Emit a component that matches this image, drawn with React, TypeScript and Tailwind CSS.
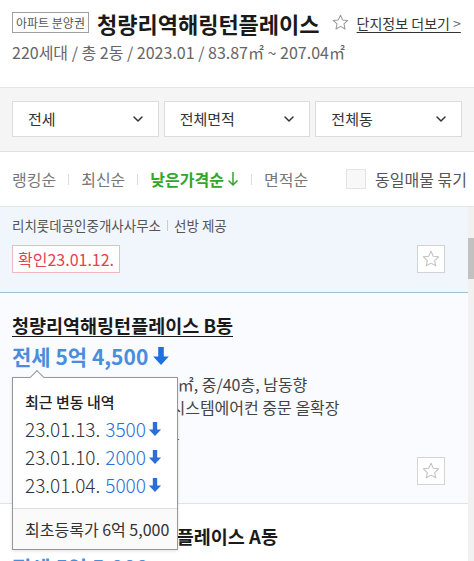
import { ChevronDown } from "lucide-react";

const FONT = { fontFamily: '"Noto Sans CJK KR", "Noto Sans", sans-serif' };

const DownArrow = ({ className }: { className?: string }) => (
  <svg viewBox="0 0 16 18" className={className} fill="currentColor">
    <path d="M5.5 1h5v8.5h4.5L8 17 1 9.5h4.5z" />
  </svg>
);

const StarOutline = ({ className }: { className?: string }) => (
  <svg viewBox="0 0 24 24" className={className} fill="none" stroke="currentColor" strokeWidth={1.3} strokeLinejoin="round">
    <path d="M12 2.8l2.75 5.9 6.45.75-4.8 4.4 1.3 6.35L12 16.95 6.3 20.2l1.3-6.35-4.8-4.4 6.45-.75z" />
  </svg>
);

const StarBox = () => (
  <div className="w-[28px] h-[28px] border border-[#d3d3d3] bg-white flex items-center justify-center">
    <StarOutline className="w-[20px] h-[20px] text-[#c4c4c4]" />
  </div>
);

const Select = ({ label }: { label: string }) => (
  <div className="flex-1 h-[36px] bg-white border border-[#dcdcdc] flex items-center justify-between pl-[15px] pr-[12px]">
    <span className="text-[15px] text-[#333]">{label}</span>
    <ChevronDown className="w-[16px] h-[16px] text-[#333]" strokeWidth={2.2} />
  </div>
);

const Sep = () => <span className="mx-[12px] w-px h-[11px] bg-[#dcdcdc]" />;

const history = [
  { date: "23.01.13.", amount: "3500" },
  { date: "23.01.10.", amount: "2000" },
  { date: "23.01.04.", amount: "5000" },
];

export default function App() {
  return (
    <div className="relative w-full h-[561px] overflow-hidden bg-white" style={FONT}>
      {/* 단지 헤더 */}
      <div className="h-[88px] border-b border-[#e6e6e6] px-3 pt-[12px]">
        <div className="flex items-center h-[21px]">
          <span className="h-[21px] px-[3px] border border-[#a0a0a0] text-[12px] text-[#555] flex items-center leading-none">
            아파트 분양권
          </span>
          <span className="ml-[8px] text-[22px] font-bold text-[#1a1a1a] leading-none">
            청량리역해링턴플레이스
          </span>
          <StarOutline className="ml-[11px] w-[19px] h-[19px] text-[#999]" />
          <span className="ml-[7px] text-[14px] text-[#333] underline underline-offset-[3px] leading-none whitespace-nowrap">
            단지정보 더보기 <span className="text-[#666]">&gt;</span>
          </span>
        </div>
        <div className="mt-[9px] text-[16px] leading-[20px] text-[#666]">
          220세대 / 총 2동 / 2023.01 / 83.87㎡ ~ 207.04㎡
        </div>
      </div>

      {/* 필터 */}
      <div className="h-[64px] bg-[#f5f5f5] border-b border-[#e2e2e2] px-3 pt-[13px] flex gap-[5px]">
        <Select label="전세" />
        <Select label="전체면적" />
        <Select label="전체동" />
      </div>

      {/* 정렬 */}
      <div className="h-[55px] border-b border-[#e6e6e6] pl-3 pr-[7px] flex items-center text-[16px]">
        <span className="text-[#777]">랭킹순</span>
        <Sep />
        <span className="text-[#777]">최신순</span>
        <Sep />
        <span className="text-[#33a52b] font-bold flex items-center">
          낮은가격순
          <svg viewBox="0 0 12 16" className="ml-[3px] w-[12px] h-[16px]" fill="none" stroke="currentColor" strokeWidth={1.5}>
            <path d="M6 1v13M1.5 9.5L6 14l4.5-4.5" />
          </svg>
        </span>
        <Sep />
        <span className="text-[#777]">면적순</span>
        <div className="ml-auto flex items-center">
          <span className="w-[20px] h-[20px] border border-[#e3e3e3] bg-[#f8f8f8]" />
          <span className="ml-[9px] text-[#555] whitespace-nowrap">동일매물 묶기</span>
        </div>
      </div>

      {/* 매물 목록 */}
      <div className="flex">
        <div className="flex-1">
          <div className="h-[86px] bg-[#f1f6fd] border-b border-[#a6bdd3] pl-3 pr-[23px] pt-[9px]">
            <div className="text-[13.5px] leading-[18px] text-[#555] flex items-center">
              리치롯데공인중개사사무소
              <span className="mx-[6px] w-px h-[11px] bg-[#ccc]" />
              선방 제공
            </div>
            <div className="mt-[11px] flex items-center justify-between">
              <span className="h-[28px] px-[5px] border border-[#f0b9bd] bg-white text-[16px] text-[#e2434e] flex items-center">
                확인23.01.12.
              </span>
              <StarBox />
            </div>
          </div>

          <div className="h-[211px] bg-[#f9fbfe] border-b border-[#dce4ec] pl-3 pr-[23px] pt-[21px] flex flex-col">
            <div className="text-[18.5px] leading-[22px] font-bold text-[#1a1a1a] underline underline-offset-[3px]">
              청량리역해링턴플레이스 B동
            </div>
            <div className="mt-[7px] flex items-center text-[21px] leading-[26px] font-bold text-[#4a8edb]">
              전세 5억 4,500
              <DownArrow className="ml-[4px] w-[18px] h-[20px] text-[#1e6fe0]" />
            </div>
            <div className="mt-[5px] text-[16px] leading-[20px] text-[#444] whitespace-nowrap">
              아파트분양권 · 114B/83㎡, 중/40층, 남동향
            </div>
            <div className="mt-[3px] text-[16px] leading-[20px] text-[#444] whitespace-nowrap">
              고층·풀옵션·커뮤니티, 시스템에어컨 중문 올확장
            </div>
            <div className="mt-[12px] text-[14px] leading-[18px] text-[#555]">
              매경부동산 | 부동산써브 제공
            </div>
            <div className="mt-[10px] self-end">
              <StarBox />
            </div>
          </div>

          <div className="bg-white pl-3 pt-[21px]">
            <div className="flex items-center text-[18.5px] leading-[22px] font-bold text-[#1a1a1a] whitespace-nowrap">
              <span className="mr-[8px] h-[14px] px-[3px] border-2 border-[#1f7a2a] text-[10px] leading-none text-[#1f7a2a] flex items-center">
                집주인
              </span>
              청량리역해링턴플레이스 A동
            </div>
            <div className="mt-[7px] text-[21px] leading-[26px] font-bold text-[#4a8edb]">전세 5억 5,000</div>
          </div>
        </div>
        <div className="w-[6px] bg-[#f1f1f1]">
          <div className="mt-[31px] h-[41px] bg-[#c1c1c1]" />
        </div>
      </div>

      {/* 최근 변동 내역 팝업 */}
      <div className="absolute left-[12px] top-[377px] w-[166px] bg-white border border-[#979797] shadow-[0_1px_3px_rgba(0,0,0,0.12)]">
        <div className="absolute -top-[6px] left-[19px] w-[10px] h-[10px] rotate-45 bg-white border-l border-t border-[#979797]" />
        <div className="relative px-[12px] pt-[14px] pb-[9px]">
          <div className="text-[15px] leading-[20px] font-medium text-[#222]">최근 변동 내역</div>
          <div className="mt-[3px]">
            {history.map((h) => (
              <div key={h.date} className="flex items-center h-[28px] text-[19px] font-light whitespace-nowrap">
                <span className="text-[#333]">{h.date}</span>
                <span className="ml-[5px] text-[#2b6fd6]">{h.amount}</span>
                <DownArrow className="ml-[2px] w-[14px] h-[16px] text-[#2b6fd6]" />
              </div>
            ))}
          </div>
        </div>
        <div className="h-[41px] border-t border-[#dddddd] bg-[#fafafa] px-[12px] flex items-center text-[16px] text-[#333] whitespace-nowrap">
          최초등록가 6억 5,000
        </div>
      </div>
    </div>
  );
}
